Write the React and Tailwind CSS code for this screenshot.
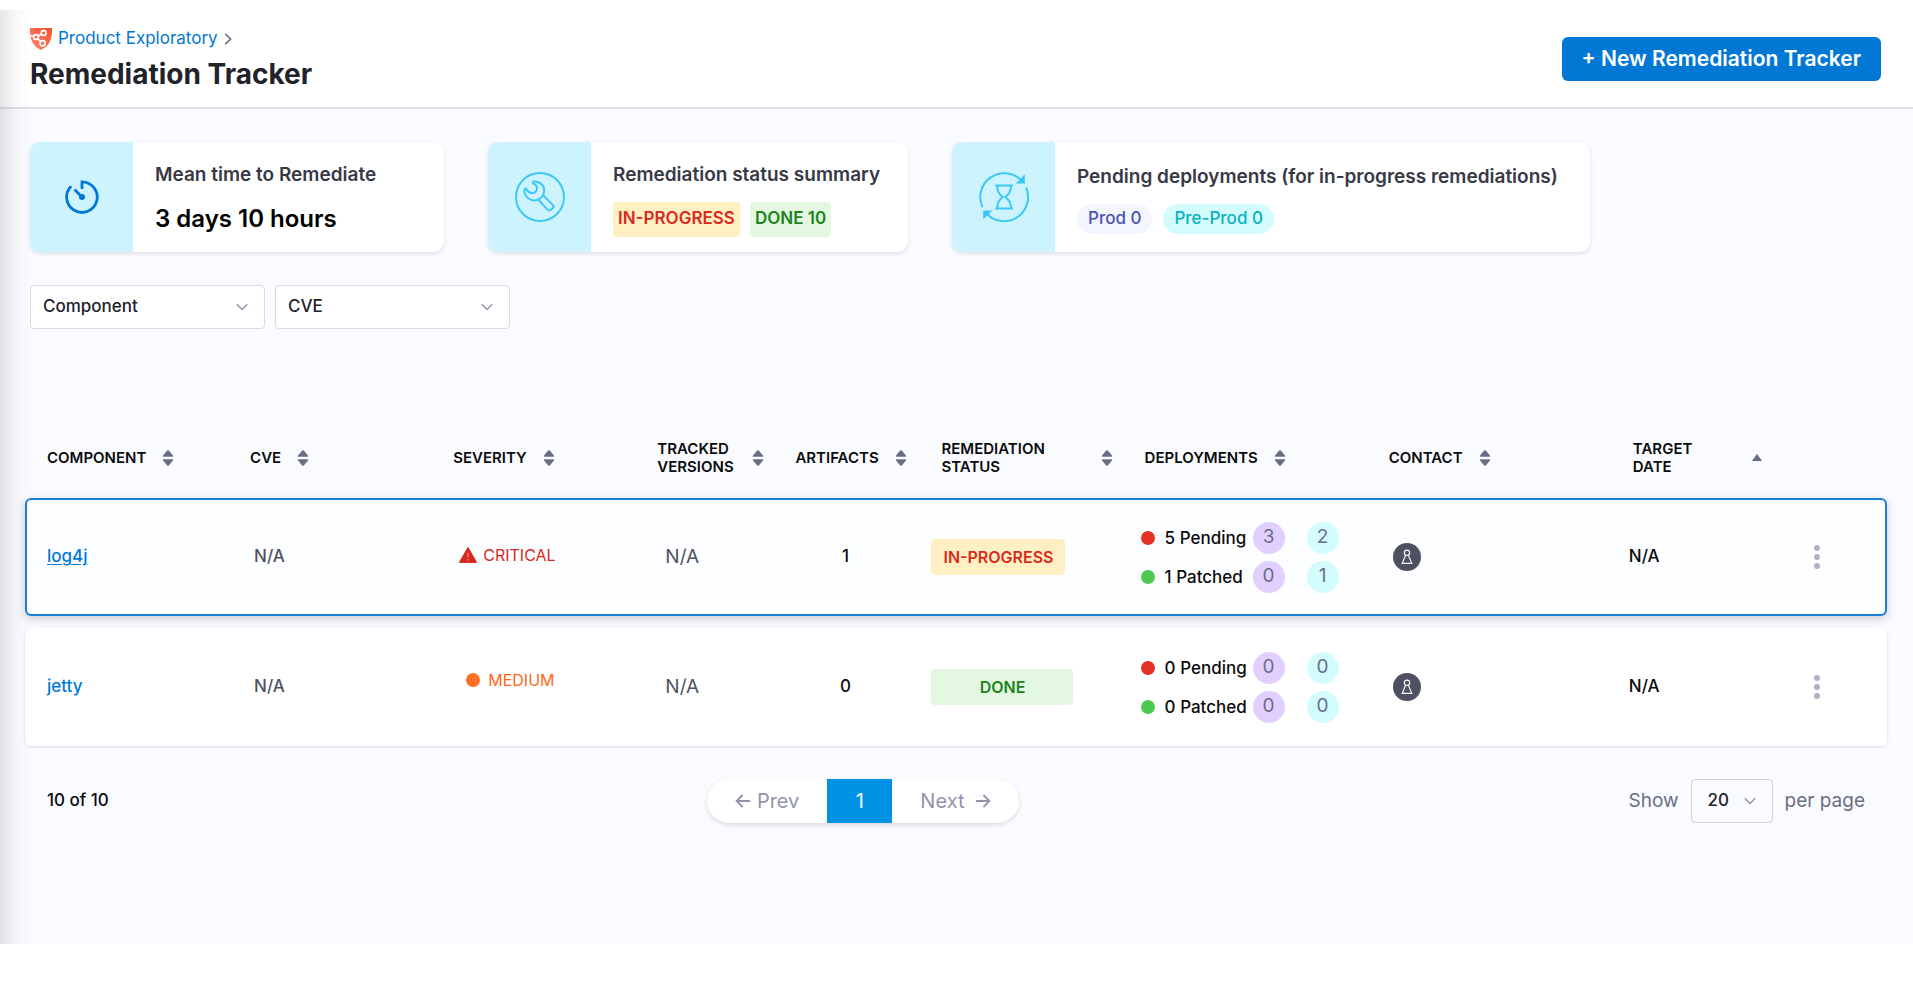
import React from "react";

const COLS =
  "grid grid-cols-[203fr_203fr_204fr_138fr_146fr_203fr_244fr_244fr_142fr_112fr] pl-[22px]";

function ShieldLogo() {
  return (
    <svg className="size-[22px] shrink-0" viewBox="0 0 22 22" fill="none" aria-hidden="true">
      <defs>
        <linearGradient id="shield" x1="0" y1="22" x2="22" y2="0" gradientUnits="userSpaceOnUse">
          <stop offset="0" stopColor="#ff8b73" />
          <stop offset="1" stopColor="#f5502f" />
        </linearGradient>
      </defs>
      <path d="M0 0h22c0 5-.2 9-1.600 12.500C18.600 17 15.500 20 11 22 6.500 20 3.400 17 1.600 12.500.2 9 0 5 0 0z" fill="url(#shield)" />
      <g stroke="#fff" strokeWidth="1.6">
        <circle cx="6" cy="9" r="2.4" />
        <circle cx="13.6" cy="5" r="2.4" />
        <circle cx="12.6" cy="15.2" r="2.6" />
        <path d="M0 7.4l3.600 1M8.2 7.9l3.2-1.7M7.8 10.7l2.9 2.8" />
      </g>
    </svg>
  );
}

function GaugeIcon() {
  return (
    <svg className="size-9" viewBox="0 0 36 36" fill="none" stroke="#0278d5" strokeWidth="2.8" aria-hidden="true">
      <path d="M18 10V2.8A15.3 15.3 0 1 1 7.2 7.2" />
      <path d="M10.5 10.5L18 18" />
      <circle cx="18" cy="18" r="3" fill="#0278d5" stroke="none" />
    </svg>
  );
}

function WrenchIcon() {
  return (
    <svg className="size-[50px]" viewBox="0 0 50 50" fill="none" stroke="#3dc7f6" strokeWidth="2" strokeLinejoin="round" aria-hidden="true">
      <circle cx="25" cy="25" r="24" />
      <path d="M18.6 9.6c5-.8 10.2 2.6 10.6 8.4.1 2-.4 3.8-1.2 5.2-.9 1.700-2.3 3.100-4 4-4.600 2.400-10.400 1.100-13.200-3.400C9.500 21.700 9.100 19.600 9.400 17.600c.2-1.400 1.600-1.400 2.200-.4 1.300 2.400 3.400 4.300 6.200 3.800 2.600-.4 4.600-2.800 4.200-5.600-.3-1.800-1.700-3-3.400-3.600-1.200-.4-1.200-1.900 0-2.200z" />
      <path d="M28 23.200l9.800 9.700c.9.900.9 2.200 0 3.100l-1.900 1.900c-.9.900-2.200.9-3.100 0L23.600 28" />
    </svg>
  );
}

function HourglassIcon() {
  return (
    <svg className="size-[50px]" viewBox="0 0 50 50" fill="none" stroke="#3dc7f6" strokeWidth="2" aria-hidden="true">
      <path d="M3.400 35.100A24 24 0 0 1 41.700 7.700" />
      <path d="M47.100 15.600A24 24 0 0 1 8 42" />
      <path d="M45.800 2.400v9.200h-9.200z" fill="#3dc7f6" stroke="none" />
      <path d="M4.200 47.600v-9.200h9.200z" fill="#3dc7f6" stroke="none" />
      <path d="M16.300 13.500h17.600M16.300 36.500h17.600" />
      <path d="M18.200 13.500c0 6 1.800 8 5.600 11.500-3.800 3.500-5.600 5.500-5.600 11.500M32 13.500c0 6-1.800 8-5.600 11.500 3.800 3.500 5.600 5.500 5.600 11.500" />
    </svg>
  );
}

function Chevron({ className }) {
  return (
    <svg className={className} viewBox="0 0 12 8" fill="none" stroke="#9293ab" strokeWidth="1.4" aria-hidden="true">
      <path d="M.8 1.200L6 6.400l5.200-5.200" />
    </svg>
  );
}

function SortIcon({ single }) {
  return (
    <svg className="h-4 w-3 shrink-0" viewBox="0 0 12 16" fill="#6b6d85" aria-hidden="true">
      {single ? (
        <path d="M6 4l5.200 7H.8z" />
      ) : (
        <path d="M5.200.6q.8-.8 1.600 0l4.200 4.800q.6 1.400-.6 1.400H1.600Q.4 6.800 1 5.400zM5.200 15.400q.8.800 1.600 0L11 10.600q.6-1.400-.6-1.400H1.600Q.4 9.200 1 10.600z" />
      )}
    </svg>
  );
}

function Arrow({ flip }) {
  return (
    <svg className="size-4" viewBox="0 0 16 16" fill="none" stroke="currentColor" strokeWidth="1.8" aria-hidden="true">
      {flip ? <path d="M15 8H1.600M7.600 2L1.600 8l6 6" /> : <path d="M1 8h13.400M8.400 2l6 6-6 6" />}
    </svg>
  );
}

function Card({ icon, title, width, children }) {
  return (
    <section
      className={
        "flex h-[110px] overflow-hidden rounded-[10px] bg-white shadow-[0_2px_4px_rgba(96,97,112,0.16),0_0_1px_rgba(40,41,61,0.06)] " +
        width
      }
    >
      <div className="flex w-[103px] shrink-0 items-center justify-center bg-[#cdf4fe]">{icon}</div>
      <div className="flex flex-col justify-center gap-[15px] px-[22px] pt-[5px] whitespace-nowrap">
        <h2 className="text-[19px] leading-6 font-semibold text-[#383946]">{title}</h2>
        {children}
      </div>
    </section>
  );
}

function Filter({ label }) {
  return (
    <div className="relative w-[235px]">
      <select
        aria-label={label}
        className="h-11 w-full appearance-none rounded border border-[#d9dae5] bg-white pr-10 pl-3 text-[17px] font-medium text-[#22222a]"
      >
        <option>{label}</option>
      </select>
      <Chevron className="pointer-events-none absolute top-[18px] right-[17px] h-2 w-3" />
    </div>
  );
}

const HEADERS = [
  { label: "COMPONENT" },
  { label: "CVE" },
  { label: "SEVERITY" },
  { label: "TRACKED VERSIONS", width: "w-[79px]" },
  { label: "ARTIFACTS" },
  { label: "REMEDIATION STATUS", width: "w-36" },
  { label: "DEPLOYMENTS" },
  { label: "CONTACT" },
  { label: "TARGET DATE", width: "w-[102px] pr-5", single: true },
];

const ROWS = [
  { name: "log4j", severity: "CRITICAL", artifacts: 1, status: "IN-PROGRESS", pending: [5, 3, 2], patched: [1, 0, 1], selected: true },
  { name: "jetty", severity: "MEDIUM", artifacts: 0, status: "DONE", pending: [0, 0, 0], patched: [0, 0, 0] },
];

function Severity({ level }) {
  if (level === "CRITICAL") {
    return (
      <span className="flex items-center gap-1.5 pb-1 pl-1.5 text-base text-[#da291d]">
        <svg className="h-4 w-[18px]" viewBox="0 0 18 16" aria-hidden="true">
          <path d="M9 .4L17.600 15.400H.4z" fill="#da291d" stroke="#da291d" strokeLinejoin="round" />
          <path d="M9 6v4.500M9 12v1.500" stroke="#f08a82" strokeWidth="1.400" />
        </svg>
        {level}
      </span>
    );
  }
  return (
    <span className="flex items-center gap-2 pb-3.5 pl-[13px] text-base text-[#ff661a]">
      <span className="size-3.5 rounded-full bg-[#ff7020]" />
      {level}
    </span>
  );
}

function Status({ value }) {
  return value === "DONE" ? (
    <span className="-ml-2.5 flex h-9 w-[142px] items-center justify-center rounded bg-[#e4f7e1] text-base font-semibold text-[#1b841d]">
      {value}
    </span>
  ) : (
    <span className="-ml-2.5 flex h-9 w-[134px] items-center justify-center rounded bg-[#fff0c4] text-base font-semibold text-[#da291d]">
      {value}
    </span>
  );
}

function DeployLine({ dot, label, values }) {
  return (
    <div className="flex items-center">
      <span className={"mr-2.5 size-3.5 shrink-0 rounded-full " + dot} />
      <span className="w-[88px] text-[17px] leading-6 font-medium whitespace-nowrap text-[#0b0b0d]">
        {values[0]} {label}
      </span>
      <span className="mr-[22px] flex size-8 items-center justify-center rounded-full bg-[#e1d0ff] text-[19px] text-[#6b6d85]">
        {values[1]}
      </span>
      <span className="flex size-8 items-center justify-center rounded-full bg-[#d3fcfe] text-[19px] text-[#6b6d85]">
        {values[2]}
      </span>
    </div>
  );
}

function Row({ row }) {
  return (
    <tr
      className={
        COLS +
        " h-[118px] items-center rounded-md " +
        (row.selected
          ? "bg-[#fdfeff] shadow-[inset_0_0_0_2px_#1b7fd4,0_3px_8px_rgba(40,41,61,0.22)]"
          : "bg-white shadow-[0_1px_3px_rgba(96,97,112,0.2)]")
      }
    >
      <td>
        <a href="#component" className={"text-[17px] font-medium text-[#0278d5]" + (row.selected ? " underline underline-offset-2" : "")}>
          {row.name}
        </a>
      </td>
      <td className="pl-1 text-[17px] font-medium text-[#4f5162]">N/A</td>
      <td>
        <Severity level={row.severity} />
      </td>
      <td className="pl-2 text-[19px] text-[#4f5162]">N/A</td>
      <td className="pr-[46px] text-center text-[17px] font-medium text-[#0b0b0d]">{row.artifacts}</td>
      <td>
        <Status value={row.status} />
      </td>
      <td>
        <div className="-ml-1 flex flex-col gap-[7px]">
          <DeployLine dot="bg-[#e43326]" label="Pending" values={row.pending} />
          <DeployLine dot="bg-[#4dc952]" label="Patched" values={row.patched} />
        </div>
      </td>
      <td className="pl-1">
        <svg className="size-7" viewBox="0 0 28 28" role="img" aria-label="Contact">
          <circle cx="14" cy="14" r="14" fill="#4f5162" />
          <g fill="none" stroke="#fff" strokeWidth="1.100">
            <circle cx="14" cy="9.800" r="2.700" />
            <path d="M12.600 12.200L9.200 20.400h9.600L15.400 12.200" />
          </g>
        </svg>
      </td>
      <td className="-ml-1 text-[17px] font-medium text-[#0b0b0d]">N/A</td>
      <td className="pl-8">
        <button type="button" aria-label={"Options for " + row.name} className="flex w-5 flex-col items-center gap-[3px] py-1">
          <span className="size-1.5 rounded-full bg-[#b0b1c4]" />
          <span className="size-1.5 rounded-full bg-[#b0b1c4]" />
          <span className="size-1.5 rounded-full bg-[#b0b1c4]" />
        </button>
      </td>
    </tr>
  );
}

export default function App() {
  return (
    <div className="min-h-screen bg-white pb-[41px] font-['Inter',sans-serif]">
      <div className="relative">
        <header className="flex h-[109px] items-center justify-between border-b-2 border-[#dfdfea] bg-white pr-8 pl-[30px]">
          <div className="pt-3">
            <nav aria-label="Breadcrumb" className="flex h-6 items-center gap-1.5">
              <ShieldLogo />
              <a href="#product" className="text-[17px] text-[#0278d5]">
                Product Exploratory
              </a>
              <svg className="h-3 w-2" viewBox="0 0 8 12" fill="none" stroke="#6b6d85" strokeWidth="1.600" aria-hidden="true">
                <path d="M1.200 .8L6.600 6l-5.400 5.200" />
              </svg>
            </nav>
            <h1 className="mt-[5px] text-[28px] leading-9 font-bold text-[#22222a]">Remediation Tracker</h1>
          </div>
          <button type="button" className="mt-2.5 h-11 rounded-md bg-[#0278d5] px-5 text-[21px] font-semibold text-white">
            + New Remediation Tracker
          </button>
        </header>

        <main className="min-h-[835px] bg-[#fafbff] pt-[33px]">
          <div className="flex flex-wrap gap-11 px-[30px]">
            <Card icon={<GaugeIcon />} title="Mean time to Remediate" width="min-w-[414px]">
              <p className="text-2xl leading-[34px] font-semibold text-black">3 days 10 hours</p>
            </Card>
            <Card icon={<WrenchIcon />} title="Remediation status summary" width="min-w-[420px]">
              <div className="flex gap-2.5 text-[17px] font-semibold">
                <span className="flex h-[35px] items-center rounded bg-[#fff0c4] px-[5px] text-[#da291d]">IN-PROGRESS</span>
                <span className="flex h-[35px] items-center rounded bg-[#e4f7e1] px-[5px] text-[#1b841d]">DONE 10</span>
              </div>
            </Card>
            <Card icon={<HourglassIcon />} title="Pending deployments (for in-progress remediations)" width="min-w-[638px]">
              <div className="flex gap-[11px] text-[17px] font-medium">
                <span className="flex h-[30px] items-center rounded-full bg-[#f3f5ff] px-[11px] text-[#4b53b0]">Prod 0</span>
                <span className="flex h-[30px] items-center rounded-full bg-[#d3fcfe] px-[11px] text-[#0ab1c1]">Pre-Prod 0</span>
              </div>
            </Card>
          </div>

          <div className="mt-[33px] flex gap-2.5 px-[30px]">
            <Filter label="Component" />
            <Filter label="CVE" />
          </div>

          <div className="pt-[98px] pr-[26px] pl-[25px]">
            <table className="block w-full text-left">
              <thead className="block">
                <tr className={COLS + " h-[62px] items-center"}>
                  {HEADERS.map((h) => (
                    <th key={h.label} scope="col" className="text-[15px] leading-[18px] font-semibold text-[#0b0b0d]">
                      <button type="button" className="flex items-center gap-4 text-left">
                        <span className={h.width}>{h.label}</span>
                        <SortIcon single={h.single} />
                      </button>
                    </th>
                  ))}
                  <th scope="col" aria-label="Options" />
                </tr>
              </thead>
              <tbody className="flex flex-col gap-3 pt-[9px]">
                {ROWS.map((row) => (
                  <Row key={row.name} row={row} />
                ))}
              </tbody>
            </table>
          </div>

          <footer className="mt-[33px] flex items-center justify-between pr-12 pl-[47px]">
            <p className="text-[17px] font-medium text-[#0b0b0d]">10 of 10</p>
            <nav
              aria-label="Pagination"
              className="mr-3 flex h-11 overflow-hidden rounded-full bg-white text-[20px] text-[#9293ab] shadow-[0_2px_4px_rgba(96,97,112,0.2)]"
            >
              <button type="button" className="flex items-center gap-1.5 px-7">
                <Arrow flip />
                Prev
              </button>
              <button type="button" aria-current="page" className="w-[65px] bg-[#0092e4] text-white">
                1
              </button>
              <button type="button" className="flex items-center gap-2.5 px-7">
                Next
                <Arrow />
              </button>
            </nav>
            <div className="flex items-center gap-3 text-[19px] text-[#6b6d85]">
              <label htmlFor="page-size">Show</label>
              <div className="relative">
                <select
                  id="page-size"
                  className="h-11 w-[82px] appearance-none rounded border border-[#d0d1e0] bg-transparent pl-4 text-[17px] font-medium text-[#22222a]"
                >
                  <option>20</option>
                </select>
                <Chevron className="pointer-events-none absolute top-[18px] right-[17px] h-2 w-3" />
              </div>
              <span>per page</span>
            </div>
          </footer>
        </main>
        <div className="pointer-events-none absolute top-2.5 bottom-0 left-0 w-8 bg-linear-to-r from-[#28293d]/12 via-[#28293d]/3 to-transparent" />
      </div>
    </div>
  );
}
